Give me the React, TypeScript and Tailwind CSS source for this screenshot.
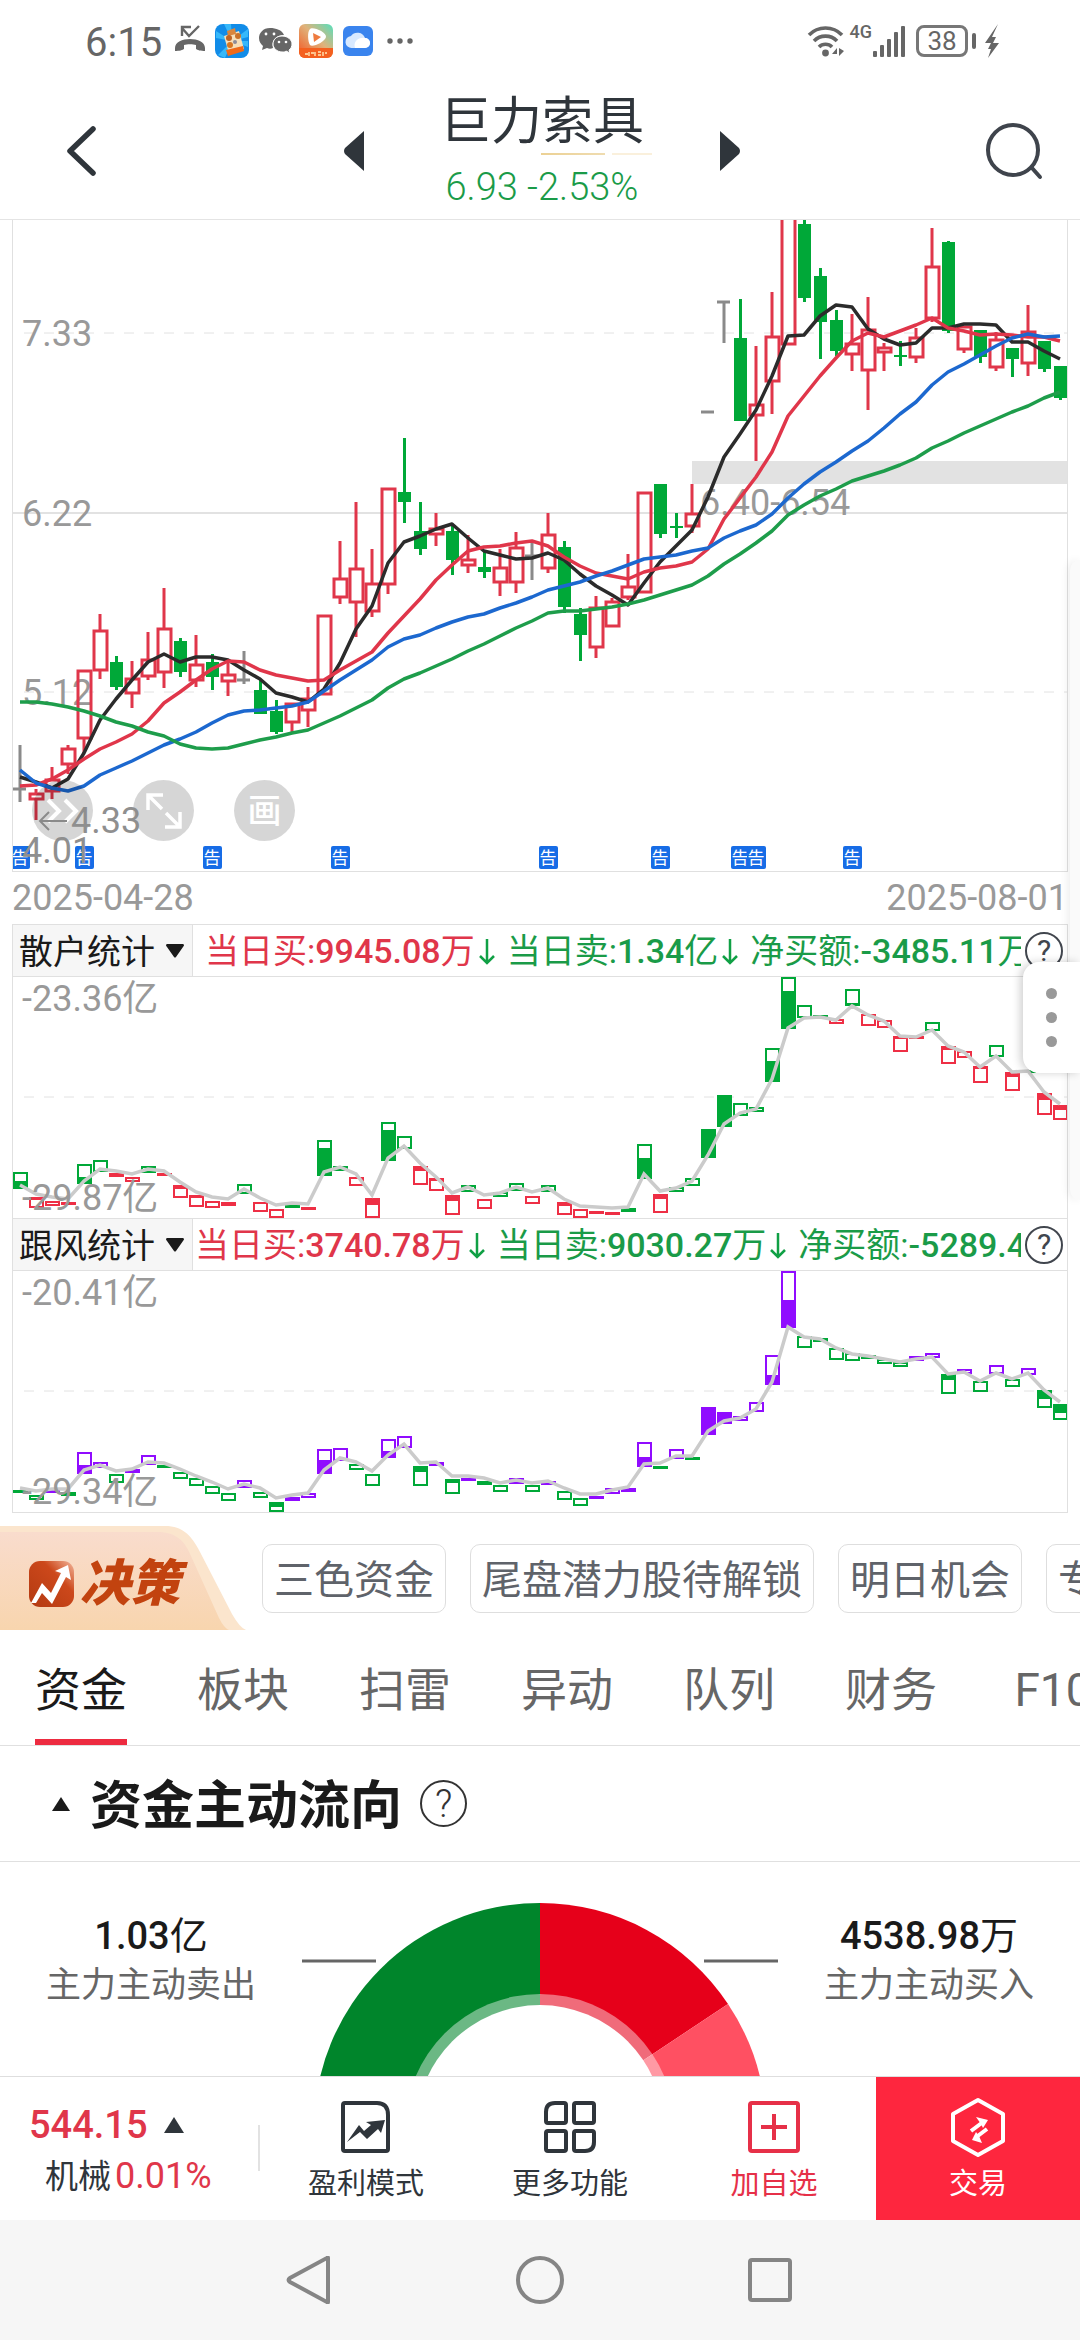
import React from "react";

const RED = "#e0364a";
const GREEN = "#00a838";
const PURPLE = "#900cff";

// every trading day takes 16 units on the x axis
const xAt = (i: number) => 20 + i * 16;

const toPoints = (values: number[]) =>
  values.map((v, i) => `${xAt(i)},${v}`).join(" ");

type Candle = ["r" | "g" | "n", number, number, number, number];

// kind, body top, body bottom, high, low
const candles: Candle[] = [
  ["n", 789, 789, 745, 802],
  ["r", 793, 800, 789, 820],
  ["r", 779, 792, 767, 799],
  ["r", 748, 765, 745, 774],
  ["r", 670, 739, 670, 753],
  ["r", 630, 671, 614, 679],
  ["g", 662, 687, 656, 690],
  ["r", 678, 694, 661, 708],
  ["r", 659, 677, 632, 680],
  ["r", 628, 673, 588, 688],
  ["g", 641, 672, 638, 677],
  ["r", 664, 681, 635, 687],
  ["g", 662, 677, 654, 690],
  ["r", 674, 682, 662, 696],
  ["n", 680, 680, 651, 684],
  ["g", 690, 714, 680, 714],
  ["g", 711, 732, 700, 734],
  ["r", 703, 723, 703, 733],
  ["r", 698, 711, 687, 727],
  ["r", 615, 695, 615, 695],
  ["r", 578, 598, 541, 604],
  ["r", 568, 603, 502, 637],
  ["r", 583, 612, 549, 617],
  ["r", 488, 585, 488, 594],
  ["g", 492, 502, 438, 523],
  ["g", 531, 549, 502, 555],
  ["r", 528, 535, 513, 546],
  ["g", 531, 560, 525, 575],
  ["r", 559, 566, 535, 573],
  ["g", 567, 572, 552, 578],
  ["r", 567, 583, 549, 596],
  ["r", 547, 583, 532, 593],
  ["n", 556, 556, 542, 580],
  ["r", 534, 569, 513, 573],
  ["g", 547, 607, 541, 613],
  ["g", 614, 635, 608, 661],
  ["r", 607, 648, 596, 658],
  ["r", 601, 627, 598, 627],
  ["r", 586, 598, 554, 600],
  ["r", 492, 593, 492, 593],
  ["g", 484, 534, 484, 538],
  ["g", 526, 528, 513, 538],
  ["r", 513, 527, 484, 533],
  ["n", 412, 412, 412, 412],
  ["n", 302, 302, 302, 343],
  ["g", 338, 421, 299, 421],
  ["r", 404, 416, 346, 461],
  ["r", 336, 382, 292, 414],
  ["r", 200, 345, 200, 345],
  ["g", 224, 298, 219, 302],
  ["g", 276, 322, 268, 359],
  ["g", 320, 351, 310, 356],
  ["r", 343, 355, 314, 371],
  ["r", 329, 371, 297, 410],
  ["r", 347, 353, 343, 371],
  ["g", 355, 357, 341, 366],
  ["r", 337, 358, 328, 363],
  ["r", 266, 319, 228, 322],
  ["g", 242, 331, 241, 333],
  ["r", 326, 350, 326, 353],
  ["g", 330, 357, 330, 363],
  ["r", 339, 368, 332, 371],
  ["g", 348, 359, 348, 377],
  ["r", 331, 364, 305, 376],
  ["g", 341, 369, 341, 372],
  ["g", 366, 398, 366, 400],
];

const ma5 = [
  777, 782, 788, 779, 753, 720, 699, 680, 662, 654, 662, 657, 657, 660, 670,
  679, 693, 697, 702, 689, 663, 629, 606, 563, 542, 536, 529, 524, 538, 551,
  555, 559, 558, 553, 560, 574, 586, 595, 605, 583, 562, 546, 530, 497, 457,
  434, 410, 376, 336, 335, 316, 305, 307, 329, 339, 345, 343, 328, 328, 324,
  324, 325, 342, 342, 351, 359,
];
const ma10 = [
  786, 785, 779, 770, 759, 749, 742, 734, 721, 703, 692, 680, 669, 661, 662,
  670, 675, 678, 681, 680, 670, 661, 652, 633, 616, 599, 580, 565, 551, 547,
  546, 543, 541, 546, 557, 566, 573, 576, 579, 572, 568, 566, 562, 549, 519,
  498, 477, 452, 416, 396, 376, 358, 341, 333, 337, 331, 325, 318, 328, 331,
  335, 334, 335, 337, 337, 341,
];
const ma20 = [
  770, 783, 788, 791, 786, 775, 768, 761, 753, 745, 739, 732, 723, 715, 711,
  710, 708, 706, 702, 691, 680, 670, 660, 647, 639, 635, 628, 622, 617, 614,
  608, 603, 597, 590, 586, 582, 576, 571, 565, 559, 557, 555, 551, 548, 538,
  531, 525, 514, 498, 484, 472, 462, 451, 441, 428, 414, 402, 385, 372, 364,
  355, 346, 338, 334, 337, 336,
];
const ma30 = [
  702, 702, 704, 707, 711, 716, 722, 726, 732, 736, 744, 748, 749, 748, 744,
  740, 737, 733, 730, 723, 716, 708, 700, 688, 679, 673, 666, 659, 651, 644,
  636, 628, 621, 613, 611, 611, 609, 607, 604, 600, 595, 590, 585, 576, 564,
  554, 543, 531, 515, 505, 496, 489, 481, 476, 471, 465, 458, 448, 441, 433,
  426, 419, 412, 406, 398, 392,
];

// direction, top, bottom, where the solid part ends (omitted: hollow)
type Bar = ["u" | "d", number, number, number?];

const retailBars: Bar[] = [
  ["u", 1172, 1189, 1181], ["d", 1197, 1208, 1200], ["d", 1201, 1206],
  ["d", 1202, 1205, 1205], ["u", 1164, 1184, 1177], ["u", 1160, 1172],
  ["d", 1173, 1177, 1177], ["d", 1177, 1182], ["u", 1166, 1173],
  ["d", 1173, 1176, 1176], ["d", 1185, 1198, 1189], ["d", 1195, 1207, 1198],
  ["d", 1201, 1208], ["d", 1202, 1206, 1206], ["u", 1184, 1194],
  ["d", 1202, 1212], ["d", 1209, 1218], ["u", 1204, 1208],
  ["d", 1207, 1210, 1210], ["u", 1140, 1176, 1148], ["u", 1166, 1171],
  ["d", 1177, 1186], ["d", 1198, 1218, 1205], ["u", 1122, 1161, 1130],
  ["u", 1136, 1149], ["d", 1166, 1185, 1171], ["d", 1178, 1191, 1181],
  ["d", 1195, 1215, 1201], ["u", 1185, 1192], ["d", 1199, 1209],
  ["u", 1192, 1197], ["u", 1183, 1191], ["d", 1196, 1204],
  ["u", 1185, 1192], ["d", 1202, 1215, 1206], ["d", 1209, 1218],
  ["d", 1211, 1214, 1214], ["d", 1212, 1215, 1215], ["u", 1208, 1212, 1208],
  ["u", 1144, 1179, 1158], ["d", 1194, 1213, 1199], ["u", 1187, 1192],
  ["u", 1178, 1186], ["u", 1129, 1158, 1129], ["u", 1095, 1127, 1095],
  ["u", 1103, 1116], ["u", 1107, 1112], ["u", 1048, 1082, 1061],
  ["u", 977, 1029, 991], ["u", 1005, 1018], ["u", 1015, 1017],
  ["d", 1019, 1024], ["u", 989, 1006, 1003], ["d", 1014, 1026],
  ["d", 1020, 1028], ["d", 1036, 1052, 1039], ["d", 1036, 1039, 1039],
  ["u", 1022, 1031], ["d", 1046, 1064, 1050], ["d", 1051, 1058],
  ["d", 1066, 1083, 1069], ["u", 1045, 1057], ["d", 1072, 1091, 1077],
  ["u", 1070, 1073, 1070], ["d", 1093, 1115, 1100], ["d", 1105, 1120, 1110],
];

const retailLine = [
  1185, 1194, 1197, 1199, 1181, 1169, 1171, 1174, 1169, 1171, 1182, 1192, 1197,
  1199, 1189, 1198, 1205, 1203, 1204, 1172, 1167, 1174, 1195, 1158, 1146, 1163,
  1177, 1193, 1187, 1195, 1193, 1187, 1192, 1188, 1199, 1206, 1207, 1208, 1207,
  1174, 1191, 1188, 1181, 1155, 1124, 1113, 1109, 1079, 1028, 1018, 1017, 1020,
  1006, 1015, 1021, 1036, 1037, 1030, 1046, 1052, 1067, 1056, 1072, 1071, 1092,
  1104,
];

const followBars: Bar[] = [
  ["d", 1491, 1494, 1494], ["d", 1496, 1501], ["u", 1491, 1494, 1491],
  ["d", 1493, 1497, 1497], ["u", 1453, 1475, 1466], ["u", 1463, 1469],
  ["d", 1475, 1484], ["u", 1470, 1474], ["u", 1456, 1466],
  ["d", 1466, 1469, 1469], ["d", 1473, 1480], ["d", 1479, 1487],
  ["d", 1487, 1495], ["d", 1494, 1502], ["u", 1481, 1489],
  ["d", 1493, 1499], ["d", 1503, 1513, 1508], ["u", 1498, 1502],
  ["u", 1494, 1499], ["u", 1450, 1475, 1461], ["u", 1449, 1462],
  ["d", 1465, 1471], ["d", 1475, 1487], ["u", 1440, 1459, 1452],
  ["u", 1437, 1449], ["d", 1467, 1487, 1473], ["u", 1463, 1467],
  ["d", 1480, 1495, 1484], ["u", 1479, 1481, 1479], ["d", 1482, 1486, 1486],
  ["d", 1486, 1493], ["u", 1479, 1485], ["d", 1486, 1493],
  ["u", 1482, 1486], ["d", 1492, 1501], ["d", 1499, 1507],
  ["u", 1497, 1500, 1497], ["u", 1489, 1495], ["u", 1489, 1493],
  ["u", 1443, 1468, 1458], ["d", 1467, 1469, 1469], ["u", 1450, 1460],
  ["d", 1458, 1461, 1461], ["u", 1408, 1436, 1408], ["u", 1413, 1425, 1413],
  ["u", 1417, 1422], ["u", 1403, 1413], ["u", 1356, 1386, 1376],
  ["u", 1272, 1329, 1301], ["d", 1337, 1349], ["d", 1339, 1343],
  ["d", 1349, 1361], ["d", 1354, 1362], ["d", 1356, 1360],
  ["d", 1360, 1365], ["d", 1363, 1368], ["u", 1357, 1362],
  ["u", 1354, 1359], ["d", 1375, 1395, 1381], ["u", 1370, 1375],
  ["d", 1382, 1393], ["u", 1366, 1375], ["d", 1380, 1388],
  ["u", 1369, 1376], ["d", 1391, 1409, 1400], ["d", 1405, 1421, 1414],
];

const followLine = [
  1489, 1492, 1490, 1490, 1471, 1466, 1472, 1470, 1463, 1464, 1470, 1477, 1483,
  1490, 1485, 1489, 1499, 1496, 1494, 1471, 1459, 1463, 1472, 1456, 1445, 1464,
  1463, 1477, 1477, 1479, 1484, 1481, 1484, 1482, 1489, 1495, 1495, 1491, 1488,
  1465, 1464, 1457, 1457, 1432, 1422, 1419, 1410, 1383, 1328, 1338, 1340, 1349,
  1355, 1357, 1360, 1363, 1360, 1358, 1375, 1373, 1382, 1374, 1380, 1374, 1391,
  1403,
];

const notices = [0, 4, 12, 20, 33, 40, 45, 46, 52];

function CandleShape({ candle, index }: { candle: Candle; index: number }) {
  const [kind, top, bottom, high, low] = candle;
  const x = xAt(index);

  if (kind === "n") {
    return (
      <g stroke="#8a8a8a" strokeWidth="3">
        <path d={`M${x} ${high}V${low}M${x - 7} ${top}h13`} />
      </g>
    );
  }
  if (kind === "g") {
    return (
      <g>
        <rect x={x - 1} y={high} width="3" height={low - high} fill={GREEN} />
        <rect x={x - 6} y={top} width="13" height={bottom - top} fill={GREEN} />
      </g>
    );
  }
  return (
    <g fill="none" stroke={RED} strokeWidth="3">
      <path d={`M${x} ${high}V${top}M${x} ${bottom}V${low}`} />
      <rect
        x={x - 6}
        y={top + 1}
        width="13"
        height={Math.max(bottom - top - 2, 2)}
      />
    </g>
  );
}

function StatusBar() {
  return (
    <div className="flex h-[82px] items-center justify-between pr-20 pl-[85px] text-[#666]">
      <div className="flex items-center">
        <span className="pt-1 text-[40px] leading-none">6:15</span>
        <svg className="ml-2.5 h-9 w-9" viewBox="0 0 36 36" fill="none">
          <path
            d="M10 13V4h9M10 5l7 8L27 3"
            stroke="#666"
            strokeWidth="2.4"
          />
          <path
            d="M3 25c0-12 30-12 30 0v3c-4 0-8-1-9-2v-4c-3-1-9-1-12 0v4c-1 1-5 2-9 2z"
            fill="#666"
          />
        </svg>
        <svg className="ml-1.5 h-9 w-9" viewBox="0 0 36 36">
          <rect x="1" y="1" width="34" height="34" rx="8" fill="#118ce8" />
          <path
            d="M18 18L2 8v7zM18 18L10 1h7zM18 18L34 6v8zM18 18l16 6v-6zM18 18L4 32l7 3z"
            fill="#36b8fa"
          />
          <path d="M10 13l15-5 5 18-15 5z" fill="#f6dfb8" />
          <path d="M13 8l8-3 1 6-8 2z" fill="#d9863c" />
          <circle cx="15" cy="15" r="3" fill="#c06321" />
          <circle cx="24" cy="13" r="3" fill="#c97228" />
          <circle cx="16" cy="22" r="3" fill="#d67722" />
          <circle cx="21" cy="19" r="2" fill="#8d8c98" />
          <path d="M12 27l17-4 1 5-16 5z" fill="#ef6a19" />
        </svg>
        <svg className="ml-2 h-9 w-9" viewBox="0 0 36 36">
          <path
            d="M12 5C5 5 1 10 1 15c0 4 2 6 4 8l-1 4 5-2c2 1 4 1 6 0-2-7 3-13 11-13C24 7 18 5 12 5z"
            fill="#666"
          />
          <path
            d="M24 13c-6 0-9 4-9 8s4 8 9 8c2 0 3 0 4-1l4 2-1-3c2-1 3-4 3-6 0-4-4-8-10-8z"
            fill="#666"
            stroke="#fff"
            strokeWidth="1"
          />
          <g fill="#fff">
            <circle cx="8" cy="11" r="1.4" />
            <circle cx="16" cy="11" r="1.4" />
            <circle cx="21" cy="19" r="1.3" />
            <circle cx="28" cy="19" r="1.3" />
          </g>
        </svg>
        <svg className="ml-1 h-9 w-9" viewBox="0 0 36 36">
          <defs>
            <linearGradient id="video" x1="1" y1="0" x2="0" y2="1">
              <stop offset="0" stopColor="#55e0bd" />
              <stop offset="0.45" stopColor="#e0b27a" />
              <stop offset="1" stopColor="#f4501c" />
            </linearGradient>
          </defs>
          <rect x="1" y="1" width="34" height="34" rx="6" fill="url(#video)" />
          <path d="M1 25h34v4a6 6 0 0 1-6 6H7a6 6 0 0 1-6-6z" fill="#f4601f" />
          <path
            d="M12 6c2-3 17 3 16 8s-14 11-16 8-3-13 0-16z"
            fill="#fff"
          />
          <path d="M15 10l8 4-7 5z" fill="#ee7b3f" />
          <path
            d="M7 31h3m1-2v4m2-3h3m1-1v4m3-4h3m-3 3h3m2-3v4m2-3h2"
            stroke="#ffe6b5"
            strokeWidth="1.4"
          />
        </svg>
        <svg className="ml-2 h-8 w-8" viewBox="0 0 32 32">
          <rect x="1" y="1" width="30" height="30" rx="6" fill="#3a84ee" />
          <path
            d="M10 23a6 6 0 0 1-1-12 8 8 0 0 1 14 2 5 5 0 0 1 0 10z"
            fill="#d8e9ff"
          />
          <path d="M13 23c-2-6 3-11 10-10a5 5 0 0 1 0 10z" fill="#fff" />
        </svg>
        <svg className="ml-3 h-2 w-7" viewBox="0 0 28 8" fill="#666">
          <circle cx="4" cy="4" r="2.7" />
          <circle cx="14" cy="4" r="2.7" />
          <circle cx="24" cy="4" r="2.7" />
        </svg>
      </div>

      <div className="flex items-center">
        <svg className="h-9 w-10" viewBox="0 0 40 36" fill="none">
          <path
            d="M3 12a23 23 0 0 1 33 0M8 18a16 16 0 0 1 23 0M13 24a9 9 0 0 1 13 0"
            stroke="#666"
            strokeWidth="3.6"
          />
          <circle cx="19.500" cy="30" r="3.4" fill="#666" />
          <path d="M26 31h5v-6zm7-6v8l5-5z" fill="#666" />
        </svg>
        <span className="ml-1 self-start text-[18px] leading-none font-medium">
          4G
        </span>
        <svg className="h-9 w-9" viewBox="0 0 36 36" fill="#666">
          <rect x="1" y="28" width="4" height="6" rx="1" />
          <rect x="8" y="22" width="4" height="12" rx="1" />
          <rect x="15" y="16" width="4" height="18" rx="1" />
          <rect x="22" y="9" width="4" height="25" rx="1" />
          <rect x="29" y="3" width="4" height="31" rx="1" />
        </svg>
        <span className="ml-2 flex h-8 w-[52px] items-center justify-center rounded-lg border-3 border-[#777] text-[26px] leading-none">
          38
        </span>
        <span className="ml-1 h-4 w-1 rounded-sm bg-[#666]" />
        <svg className="ml-2 h-9 w-4" viewBox="0 0 16 36" fill="#666">
          <path d="M14 1L1 20h6l-3 6h3L4 35l11-15H9l3-6H8z" />
        </svg>
      </div>
    </div>
  );
}

function Header() {
  return (
    <header className="flex h-[138px] items-center justify-between border-b border-[#e4e4e4] px-[60px]">
      <button aria-label="返回">
        <svg className="h-[54px] w-10" viewBox="0 0 40 54" fill="none">
          <path
            d="M33 5L10 27l23 22"
            stroke="#2f353b"
            strokeWidth="5.500"
            strokeLinecap="round"
            strokeLinejoin="round"
          />
        </svg>
      </button>
      <div className="flex w-[396px] items-center justify-between">
        <button aria-label="上一只">
          <svg className="h-10 w-5" viewBox="0 0 20 40" fill="#2f353b">
            <path d="M20 0v40L1 23q-2-3 0-6z" />
          </svg>
        </button>
        <div className="relative flex flex-col items-center">
          <h1 className="text-[51px] leading-[72px] text-[#2f353b]">
            巨力索具
          </h1>
          <span className="absolute top-[67px] left-[101px] h-0.5 w-16 bg-linear-to-r from-[#ecd194] to-[#efdcb0]" />
          <span className="absolute top-[67px] left-[172px] h-0.5 w-10 bg-[#faf0dc]" />
          <p className="text-[38px] leading-[58px] font-light text-[#1a9b48]">
            6.93 -2.53%
          </p>
        </div>
        <button aria-label="下一只">
          <svg className="h-10 w-5" viewBox="0 0 20 40" fill="#2f353b">
            <path d="M0 0v40l19-17q2-3 0-6z" />
          </svg>
        </button>
      </div>
      <button aria-label="搜索" className="-mr-6">
        <svg className="h-[60px] w-[60px]" viewBox="0 0 60 60" fill="none">
          <g stroke="#3f444c" strokeWidth="4" strokeLinecap="round">
            <circle cx="29" cy="29" r="25" />
            <path d="M48 47l8 9" />
          </g>
        </svg>
      </button>
    </header>
  );
}

function KLineChart() {
  return (
    <section>
      <div className="relative mx-3 border-x border-b border-[#e0e0e0]">
        <svg className="block w-full" viewBox="13 220 1054 651">
          <g stroke="#e2e2e2" fill="none">
            <path d="M24 333H1067M24 692H1067" strokeDasharray="10 10" />
            <path d="M13 513H1067" strokeWidth="2" />
          </g>
          <rect x="692" y="461" width="375" height="23" fill="#e2e2e2" />
          <g fill="#999" fontSize="36">
            <text x="22" y="346">7.33</text>
            <text x="22" y="526">6.22</text>
            <text x="22" y="705">5.12</text>
            <text x="700" y="515">6.40-6.54</text>
          </g>
          {candles.map((candle, i) => (
            <CandleShape key={i} candle={candle} index={i} />
          ))}
          <g fill="none" strokeWidth="3.500" strokeLinejoin="round">
            <polyline points={toPoints(ma5)} stroke="#2b2b2b" />
            <polyline points={toPoints(ma10)} stroke={RED} />
            <polyline points={toPoints(ma20)} stroke="#1c68cf" />
            <polyline points={toPoints(ma30)} stroke="#1e9d4b" />
          </g>
          {notices.map((day) => (
            <g key={day}>
              <rect x={xAt(day) - 9} y="846" width="19" height="23" rx="2" fill="#176ce6" />
              <text
                x={xAt(day)}
                y="864"
                fontSize="17"
                fill="#fff"
                textAnchor="middle"
              >
                告
              </text>
            </g>
          ))}
        </svg>

        <div className="absolute bottom-[30px] left-[19px] flex gap-10">
          <button
            aria-label="快进"
            className="flex size-[61px] items-center justify-center rounded-full bg-black/16"
          >
            <svg className="size-9" viewBox="0 0 36 36" fill="none">
              <path
                d="M3 7l11 11L3 29M20 7l11 11-11 11"
                stroke="#fff"
                strokeWidth="4"
              />
            </svg>
          </button>
          <button
            aria-label="全屏"
            className="flex size-[61px] items-center justify-center rounded-full bg-black/16"
          >
            <svg className="size-10" viewBox="0 0 40 40" fill="none">
              <path
                d="M19 4H4v15M4 4l14 14M21 36h15V21M36 36L22 22"
                stroke="#fff"
                strokeWidth="3.500"
              />
            </svg>
          </button>
          <button className="flex size-[61px] items-center justify-center rounded-full bg-black/16 text-[34px] leading-none font-medium text-white">
            画
          </button>
        </div>

        <svg
          className="pointer-events-none absolute inset-0 w-full"
          viewBox="13 220 1054 651"
        >
          <path
            d="M67 821H40M49 812l-9 9 9 9"
            stroke="#8a8a8a"
            strokeWidth="2"
            fill="none"
          />
          <g fill="#8f8f8f" fontSize="36">
            <text x="71" y="833">4.33</text>
            <text x="22" y="863">4.01</text>
          </g>
        </svg>
      </div>
      <div className="mx-3 flex h-[52px] items-center justify-between text-[36px] leading-none text-[#999]">
        <span>2025-04-28</span>
        <span>2025-08-01</span>
      </div>
    </section>
  );
}

function HelpButton() {
  return (
    <button
      aria-label="说明"
      className="flex size-[38px] shrink-0 items-center justify-center rounded-full border-2 border-[#41464e] text-[30px] leading-none text-[#41464e]"
    >
      ?
    </button>
  );
}

// the figure is heavier than the unit behind it
function Amount({ value }: { value: string }) {
  return (
    <>
      <b className="font-medium">{value.slice(0, -1)}</b>
      {value.slice(-1)}
    </>
  );
}

interface PanelProps {
  id: string;
  name: string;
  options: string[];
  buy: string;
  sell: string;
  net: string;
  padded?: boolean;
  top: number;
  max: string;
  min: string;
  bars: Bar[];
  line: number[];
  upColor: string;
  downColor: string;
}

function FlowPanel(props: PanelProps) {
  const { top, bars, line, upColor, downColor } = props;

  return (
    <section className="mx-3 border-x border-t border-[#e0e0e0]">
      <div className="flex h-[52px] items-center border-b border-[#e0e0e0]">
        <label
          htmlFor={props.id}
          className="relative flex h-full w-[180px] shrink-0 items-center border-r border-[#e0e0e0] bg-[#f6f6f6]"
        >
          <select
            id={props.id}
            aria-label="指标"
            defaultValue={props.name}
            className="h-full w-full appearance-none bg-transparent pt-0.5 pl-1.5 text-[34px] text-[#1a1a1a]"
          >
            {props.options.map((option) => (
              <option key={option}>{option}</option>
            ))}
          </select>
          <svg
            className="pointer-events-none absolute right-2 h-3.5 w-[18px]"
            viewBox="0 0 18 14"
            fill="#1a1a1a"
          >
            <path d="M1 0h16q2 1 0 3l-7 10q-1 1-2 0L1 3q-2-2 0-3z" />
          </svg>
        </label>
        <div
          className={`flex min-w-0 flex-1 overflow-hidden pt-0.5 text-[34px] leading-[51px] whitespace-nowrap text-[#1a9b48] ${
            props.padded ? "pl-3" : "pl-0.5"
          }`}
        >
          <span className="text-[#e0364a]">
            当日买:
            <Amount value={props.buy} />
          </span>
          <DownArrow />
          <span>
            当日卖:
            <Amount value={props.sell} />
          </span>
          <DownArrow />
          <span>
            净买额:
            <Amount value={props.net} />
          </span>
        </div>
        <div className="pr-1 pl-1">
          <HelpButton />
        </div>
      </div>
      <svg className="block w-full" viewBox={`13 ${top} 1054 241`}>
        <path
          d={`M24 ${top + 120}H1067`}
          stroke="#e2e2e2"
          strokeDasharray="10 10"
        />
        {bars.map(([dir, y1, y2, solid], i) => {
          const color = dir === "u" ? upColor : downColor;
          const x = xAt(i);
          return (
            <g key={i}>
              <rect
                x={x - 6}
                y={y1 + 1}
                width="13"
                height={Math.max(y2 - y1 - 2, 1)}
                fill="#fff"
                stroke={color}
                strokeWidth="2"
              />
              {solid !== undefined && (
                <rect
                  x={x - 6}
                  y={dir === "u" ? solid : y1}
                  width="13"
                  height={dir === "u" ? y2 - solid : solid - y1}
                  fill={color}
                />
              )}
            </g>
          );
        })}
        <polyline
          points={toPoints(line)}
          fill="none"
          stroke="#cbcbcb"
          strokeWidth="3.500"
        />
        <g fill="#999" fontSize="36">
          <text x="22" y={top + 34}>{props.max}</text>
          <text x="22" y={top + 233}>{props.min}</text>
        </g>
      </svg>
    </section>
  );
}

function DownArrow() {
  return (
    <svg
      className="mt-3 mr-3 ml-1 h-7 w-4 shrink-0"
      viewBox="0 0 16 28"
      fill="none"
      stroke="#10a045"
      strokeWidth="2.500"
    >
      <path d="M8 1v24M1 18l7 7 7-7" />
    </svg>
  );
}

function DecisionBar() {
  const chips = ["三色资金", "尾盘潜力股待解锁", "明日机会", "专家解盘"];

  return (
    <div className="mt-[13px] flex h-[104px] items-center overflow-hidden">
      <div className="relative h-full w-[262px] shrink-0">
        <svg className="absolute inset-0 h-full w-full" viewBox="0 0 262 104">
          <defs>
            <linearGradient id="gold" x1="0" y1="0" x2="0" y2="1">
              <stop offset="0" stopColor="#f9dccd" />
              <stop offset="1" stopColor="#f8d5ae" />
            </linearGradient>
            <linearGradient id="mark" x1="1" y1="0" x2="0" y2="1">
              <stop offset="0" stopColor="#f3b89d" />
              <stop offset="0.35" stopColor="#cc481b" />
              <stop offset="1" stopColor="#b33a12" />
            </linearGradient>
          </defs>
          <path
            d="M0 0h165c18 0 27 10 35 26l32 62q8 14 14 16H0z"
            fill="#fbe5cd"
          />
          <path
            d="M0 6h158c18 0 27 9 33 24l28 62q5 10 10 12H0z"
            fill="url(#gold)"
          />
          <rect x="29" y="35" width="45" height="46" rx="11" fill="url(#mark)" />
          <path
            d="M31 77l11-20 9 10 10-20-6-2 13-6 3 15-5-3-14 27-10-11-6 10z"
            fill="#fff"
          />
        </svg>
        <span className="absolute top-7 left-20 text-[50px] leading-[60px] font-black text-[#c2430f] italic">
          决策
        </span>
      </div>
      <div className="flex gap-6">
        {chips.map((chip) => (
          <button
            key={chip}
            className="h-[69px] shrink-0 rounded-[10px] border border-[#dedede] px-[11px] pt-1.5 text-[40px] leading-none whitespace-nowrap text-[#5f636a]"
          >
            {chip}
          </button>
        ))}
      </div>
    </div>
  );
}

function Tabs() {
  const tabs = ["资金", "板块", "扫雷", "异动", "队列", "财务", "F10"];

  return (
    <nav className="flex h-[116px] gap-[70px] overflow-hidden border-b border-[#e0e0e0] pl-[35px] text-center text-[46px]">
      {tabs.map((tab, i) => (
        <a
          key={tab}
          href="#"
          className={
            i === 0
              ? "min-w-[92px] shrink-0 border-b-6 border-[#ed2b40] leading-[121px] text-[#1a1a1a]"
              : "min-w-[92px] shrink-0 leading-[121px] text-[#666]"
          }
        >
          {tab}
        </a>
      ))}
    </nav>
  );
}

function Stat({ value, label }: { value: string; label: string }) {
  return (
    <div className="flex w-[302px] flex-col items-center pt-12">
      <span className="text-[38px] leading-[52px] text-[#1a1a1a]">
        <Amount value={value} />
      </span>
      <span className="text-[35px] leading-[48px] text-[#666]">{label}</span>
    </div>
  );
}

function FundFlow() {
  return (
    <section>
      <div className="flex h-[116px] items-center border-b border-[#e0e0e0] pl-[52px]">
        <svg className="h-3.5 w-[18px]" viewBox="0 0 18 14" fill="#1a1a1a">
          <path d="M9 0l9 14H0z" />
        </svg>
        <h2 className="ml-5 pt-1.5 text-[52px] leading-none font-bold text-[#1a1a1a]">
          资金主动流向
        </h2>
        <button
          aria-label="说明"
          className="ml-[18px] flex size-[47px] items-center justify-center rounded-full border-2 border-[#333] text-[38px] leading-none font-light text-[#333]"
        >
          ?
        </button>
      </div>
      <div className="flex justify-between">
        <Stat value="1.03亿" label="主力主动卖出" />
        <svg
          className="h-[214px] w-[476px]"
          viewBox="302 1862 476 214"
        >
          <path d="M540 1903A226 226 0 0 0 314 2129H540z" fill="#00852b" />
          <path d="M540 1903A226 226 0 0 1 728 2004L540 2129z" fill="#e6001a" />
          <path d="M728 2004A226 226 0 0 1 766 2129H540z" fill="#ff5062" />
          <circle cx="540" cy="2129" r="135" fill="#fff" fillOpacity="0.42" />
          <circle cx="540" cy="2129" r="124" fill="#fff" />
          <path d="M302 1961h74M704 1961h74" stroke="#666" strokeWidth="3" />
        </svg>
        <Stat value="4538.98万" label="主力主动买入" />
      </div>
    </section>
  );
}

function ActionBar() {
  return (
    <footer className="flex h-36 border-t border-[#dedede] text-[28px]">
      <div className="relative flex flex-1 flex-col pt-[22px] pl-[29px] text-[#e0364a]">
        <div className="flex h-[52px] items-center">
          <span className="text-[38px] leading-none font-medium">544.15</span>
          <svg className="ml-4 h-4 w-5" viewBox="0 0 20 16" fill="#2f353b">
            <path d="M10 0l10 16H0z" />
          </svg>
        </div>
        <div className="flex h-[50px] items-center pl-4">
          <span className="text-[33px] leading-none text-[#2f353b]">机械</span>
          <span className="ml-1 text-[36px] leading-none">0.01%</span>
        </div>
        <span className="absolute top-12 right-1 h-[46px] w-0.5 bg-[#e2e2e2]" />
      </div>
      <ActionButton label="盈利模式" className="text-[#2f353b]">
        <path d="M6 3h32q11 0 11 12v34q0 2-2 2H6q-2 0-2-2V5q0-2 2-2z" />
        <path
          d="M8 42l12-17 5 6 7-6-5-3 19-2-4 13-3-4-11 10-7-7z"
          fill="currentColor"
          stroke="none"
        />
      </ActionButton>
      <ActionButton label="更多功能" className="text-[#2f353b]">
        <path d="M12 3h9q2 0 2 2v16q0 2-2 2H5q-2 0-2-2v-9q0-9 9-9zM33 3h16q2 0 2 2v16q0 2-2 2H33q-2 0-2-2V5q0-2 2-2zM5 31h16q2 0 2 2v16q0 2-2 2H5q-2 0-2-2V33q0-2 2-2zM33 31h16q2 0 2 2v9q0 9-9 9h-9q-2 0-2-2V33q0-2 2-2z" />
      </ActionButton>
      <ActionButton label="加自选" className="text-[#e63048]">
        <rect x="3" y="3" width="48" height="48" rx="2" />
        <path d="M27 14v26M14 27h26" />
      </ActionButton>
      <ActionButton label="交易" className="bg-[#fe263e] text-white">
        <path d="M27 0l25 14v27L27 55 2 41V14z" strokeLinejoin="round" />
        <path d="M20 31l12-9M36 29l-12 9" />
        <path
          d="M25 17l12 3-5 8-2-4zM31 43l-10-3 4-8 3 4z"
          fill="currentColor"
          stroke="none"
        />
      </ActionButton>
    </footer>
  );
}

function ActionButton({
  label,
  className,
  children,
}: {
  label: string;
  className: string;
  children: React.ReactNode;
}) {
  return (
    <button
      className={`flex w-[204px] flex-col items-center pt-[23px] ${className}`}
    >
      <svg
        className="size-[54px] overflow-visible"
        viewBox="0 0 54 54"
        fill="none"
        stroke="currentColor"
        strokeWidth="4"
      >
        {children}
      </svg>
      <span className="mt-2.5 text-[29px] leading-10">{label}</span>
    </button>
  );
}

function SystemNav() {
  return (
    <div className="flex h-[120px] items-center justify-center gap-[182px] bg-[#f6f6f6]">
      <button aria-label="后退">
        <svg className="size-12" viewBox="0 0 48 48" fill="none">
          <path
            d="M42 2v44q0 1-1 0L4 26q-3-2 0-4L41 2q1-1 1 0z"
            stroke="#858585"
            strokeWidth="4"
          />
        </svg>
      </button>
      <button aria-label="主页">
        <svg className="size-12" viewBox="0 0 48 48" fill="none">
          <circle cx="24" cy="24" r="22" stroke="#858585" strokeWidth="4" />
        </svg>
      </button>
      <button aria-label="最近任务">
        <svg className="size-12" viewBox="0 0 48 48" fill="none">
          <rect x="4" y="4" width="40" height="40" rx="2" stroke="#858585" strokeWidth="4" />
        </svg>
      </button>
    </div>
  );
}

export default function App() {
  return (
    <div className="relative min-h-screen overflow-hidden bg-white font-['Roboto','Noto_Sans_CJK_SC',sans-serif]">
      <StatusBar />
      <Header />
      <KLineChart />
      <div className="relative">
        <FlowPanel
          id="retail"
          name="散户统计"
          options={["散户统计", "跟风统计"]}
          buy="9945.08万"
          sell="1.34亿"
          net="-3485.11万"
          padded
          top={977}
          max="-23.36亿"
          min="-29.87亿"
          bars={retailBars}
          line={retailLine}
          upColor={GREEN}
          downColor="#ee2f45"
        />
        <FlowPanel
          id="follow"
          name="跟风统计"
          options={["散户统计", "跟风统计"]}
          buy="3740.78万"
          sell="9030.27万"
          net="-5289.49万"
          top={1272}
          max="-20.41亿"
          min="-29.34亿"
          bars={followBars}
          line={followLine}
          upColor={PURPLE}
          downColor={GREEN}
        />
        <div className="mx-3 border-t border-[#e0e0e0]" />
        {/* side drawer peeking in from the right edge, with its handle */}
        <div className="absolute -top-[364px] right-0 h-[640px] w-2.5 rounded-l-3xl bg-[#fafafa] shadow-[-2px_0_8px_rgba(0,0,0,0.08)]" />
        <button
          aria-label="更多"
          className="absolute top-[38px] right-0 flex h-[111px] w-[57px] flex-col items-center justify-center gap-[13px] rounded-l-2xl bg-white shadow-[-3px_0_8px_rgba(0,0,0,0.18)]"
        >
          <span className="size-[11px] rounded-full bg-[#999]" />
          <span className="size-[11px] rounded-full bg-[#999]" />
          <span className="size-[11px] rounded-full bg-[#999]" />
        </button>
      </div>
      <DecisionBar />
      <Tabs />
      <FundFlow />
      <ActionBar />
      <SystemNav />
    </div>
  );
}
